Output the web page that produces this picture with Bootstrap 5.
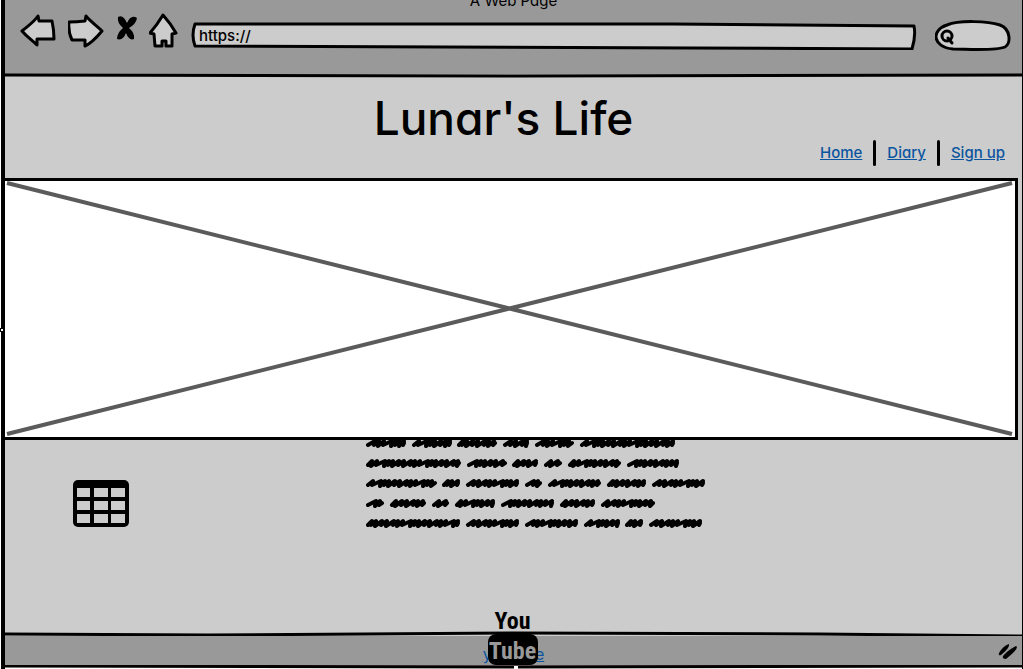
<!DOCTYPE html>
<html lang="en">
<head>
<meta charset="utf-8">
<meta name="viewport" content="width=device-width, initial-scale=1">
<title>Lunar's Life</title>
<link href="https://cdn.jsdelivr.net/npm/bootstrap@5.3.0/dist/css/bootstrap.min.css" rel="stylesheet">
<style>
  body { font-family: Inter, "Open Sans", sans-serif; font-feature-settings: "cv11"; font-size: 15px; line-height: 20px; color: #000; background: #fff; }
  a { color: #0b55a0; }
  a:hover { color: #063c75; }
  svg { display: block; }
  .ink { fill: none; stroke: #000; stroke-width: 3; stroke-linejoin: round; stroke-linecap: round; vector-effect: non-scaling-stroke; }
  .ink.paper { fill: #ccc; }
  .ink.scribble { stroke-width: 4; }
  .frame { margin-left: 1px; border-left: 4px solid #000; border-right: 1px solid #000; background: #ccc; min-height: 100vh; }
  .chrome { background: #999; height: 74px; }
  .window-title { margin-top: -9px; margin-bottom: 2px; }
  .tools { padding: 0 11px 0 15px; gap: 12px; }
  .tool { background: none; border: 0; padding: 0; }
  .rule { height: 3px; }
  .sketch-field { position: relative; }
  .sketch-field > svg { position: absolute; inset: 0; width: 100%; height: 100%; }
  .sketch-field input { position: relative; display: block; width: 100%; border: 0; background: transparent; outline: 0; }
  .address { height: 28px; margin: 9px 6px 0 0; }
  .address input { height: 27px; padding: 0 8px; font-weight: 500; }
  .search { width: 76px; height: 32px; margin-top: 7px; }
  .search input { height: 30px; padding: 0 10px 0 22px; }
  .site-title { font-size: 46px; line-height: 56px; font-weight: 500; margin: 13px 0 0; padding-right: 20px; }
  .site-nav { padding: 0 17px 12px 0; gap: 11px; margin-top: -6px; font-weight: 500; }
  .divider { width: 3px; height: 26px; border-radius: 2px; background: #000; }
  .banner { height: 262px; margin: 0 4px 0 -3px; border: 3px solid #000; background: #fff; }
  .cross { stroke: #5b5b5b; stroke-width: 4; vector-effect: non-scaling-stroke; }
  .calendar { margin: 40px 0 0 68px; }
  .copy { width: 342px; height: 91px; margin-left: 237px; }
  .foot { height: 29px; background: #999; font-size: 16px; }
  .yt { position: absolute; left: 50%; bottom: 0; width: 50px; margin-left: -26px; font: 700 24px/26px "Liberation Sans Narrow", "Roboto Condensed", "DejaVu Sans Condensed", sans-serif; }
  .yt-box { background: #000; color: #999; border-radius: 8px; height: 31px; line-height: 34px; }
  .grip { position: absolute; right: 3px; bottom: 4px; }
  .handle { position: absolute; width: 4px; height: 4px; background: #fff; border: 1px solid #000; }
  .handle-left { left: 0; top: 49%; }
  .handle-bottom { left: 50%; bottom: 0; border: 0; height: 3px; }
</style>
</head>
<body>
<div class="frame d-flex flex-column position-relative">
  <header class="chrome overflow-hidden d-flex flex-column">
    <div class="window-title text-center">A Web Page</div>
    <div class="tools d-flex align-items-start">
      <button class="tool" type="button" aria-label="Back"><svg width="36" height="36"><path class="ink paper" d="M2 18C8 13 14 9 18 3L19 8L32 8Q34 17 34 26L17 26L17 32C12 27 7 24 2 18Z"/></svg></button>
      <button class="tool" type="button" aria-label="Forward"><svg width="36" height="36"><path class="ink paper" d="M1 9Q9 9 17 8L18 3C23 9 29 13 34 18C29 24 24 30 17 33L17 27L4 27Q0 19 1 9Z"/></svg></button>
      <button class="tool" type="button" aria-label="Stop"><svg width="21" height="32"><path d="M2 4Q7 1 11 10Q15 1 21 5Q20 11 13 15Q19 20 18 26Q13 28 10 20Q7 28 1 26Q1 20 7 15Q1 10 2 4Z"/></svg></button>
      <button class="tool" type="button" aria-label="Home"><svg width="30" height="37"><path class="ink paper" d="M1 20Q8 12 14 2Q22 11 27 20L23 21L23 33L17 33L17 28L13 28L13 33L6 33L5 21Z"/></svg></button>
      <label class="address sketch-field flex-grow-1">
        <svg viewBox="0 0 724 28" preserveAspectRatio="none" aria-hidden="true"><path class="ink paper" d="M4 2L480 2L721 4Q723 14 719 27L500 26L4 24Q0 13 4 2Z"/></svg>
        <input type="text" value="https://" aria-label="Address">
      </label>
      <label class="search sketch-field">
        <svg viewBox="0 0 76 32" aria-hidden="true"><path class="ink paper" d="M18 29C-3 27-4 10 12 5C24 0 53 1 65 5C76 9 76 24 70 27C61 31 32 29 18 29Z"/><circle class="ink" cx="12" cy="16" r="5"/><path class="ink" d="M13 18L17 23"/></svg>
        <input type="search" aria-label="Search">
      </label>
    </div>
  </header>
  <svg class="rule w-100 overflow-visible" viewBox="0 0 1000 3" preserveAspectRatio="none" aria-hidden="true"><path class="ink" d="M0 1L500 2L1000 1"/></svg>

  <h1 class="site-title text-center">Lunar's Life</h1>
  <nav class="site-nav d-flex justify-content-end align-items-center" aria-label="Main">
    <a href="#home">Home</a><span class="divider"></span>
    <a href="#diary">Diary</a><span class="divider"></span>
    <a href="#signup">Sign up</a>
  </nav>

  <div class="banner" role="img" aria-label="Banner image">
    <svg class="w-100 h-100" viewBox="0 0 1008 256" preserveAspectRatio="none"><path class="cross" d="M2 2L1005 253M2 253L1005 2"/></svg>
  </div>

  <main class="flex-grow-1 d-flex align-items-start">
    <svg class="calendar flex-shrink-0" width="56" height="47" role="img" aria-label="Calendar">
      <rect width="56" height="47" rx="5"/>
      <path fill="#ccc" d="M4 8h13v9H4zM21 8h14v9H21zM38 8h14v9H38zM4 21h13v9H4zM21 21h14v9H21zM38 21h14v9H38zM4 34h13v9H4zM21 34h14v9H21zM38 34h14v9H38z"/>
    </svg>
    <svg class="copy flex-shrink-0" viewBox="0 0 342 91" role="img" aria-label="Paragraph of placeholder text"><path id="scribble" class="ink scribble"/></svg>
  </main>

  <svg class="rule w-100 flex-shrink-0 overflow-visible position-relative" viewBox="0 0 1000 3" preserveAspectRatio="none" aria-hidden="true"><path class="ink" d="M0 1L200 2L500 0L800 1L1000 3"/></svg>
  <footer class="position-relative">
    <div class="foot text-center"><a class="d-inline-block pt-2" href="#youtube">youtube</a></div>
    <div class="yt text-center" aria-hidden="true"><div>You</div><div class="yt-box">Tube</div></div>
    <svg class="grip" width="22" height="20" aria-hidden="true"><path d="M2 12Q6 5 12 3Q13 7 4 14Q1 15 2 12ZM6 15Q11 9 19 5Q23 7 9 18Q5 18 6 15Z"/></svg>
  </footer>
  <svg class="w-100 flex-shrink-0 position-relative" height="4" viewBox="0 0 1000 4" preserveAspectRatio="none" aria-hidden="true"><rect y="2" width="1000" height="2" fill="#fff"/><rect width="1000" height="2" fill="#999"/><path class="ink" d="M0 1L500 2L1000 1"/></svg>
  <span class="handle handle-bottom"></span>
</div>
<span class="handle handle-left"></span>

<script src="https://cdn.jsdelivr.net/npm/bootstrap@5.3.0/dist/js/bootstrap.bundle.min.js"></script>
<script>
  // Start and end of every scribbled word, line by line.
  const lines = [
    [0,40, 46,86, 91,131, 137,163, 169,208, 214,309],
    [0,95, 101,141, 146,172, 178,196, 202,255, 261,313],
    [0,71, 76,94, 100,153, 159,176, 182,235, 241,280, 286,339],
    [0,18, 24,60, 66,83, 89,129, 135,188, 194,229, 235,289],
    [0,94, 100,153, 159,212, 218,254, 259,277, 283,336]
  ];
  const steps = [7, 4, 5, 8, 4, 4, 6, 5];
  let d = "";
  lines.forEach((words, row) => {
    const y = 3 + row * 20;
    for (let i = 0; i < words.length; i += 2) {
      const end = words[i + 1] - 2;
      let x = words[i] + 2, k = row + i;
      d += `M${x} ${y + 2}`;
      while (x < end - 3) {
        const step = steps[k++ % steps.length];
        const top = Math.min(x + step, end);
        d += `L${top} ${y - 2}L${top - 1} ${y + 3 - k % 2}`;
        x = top;
      }
      d += `L${end} ${y}`;
    }
  });
  document.getElementById("scribble").setAttribute("d", d);
</script>
</body>
</html>
